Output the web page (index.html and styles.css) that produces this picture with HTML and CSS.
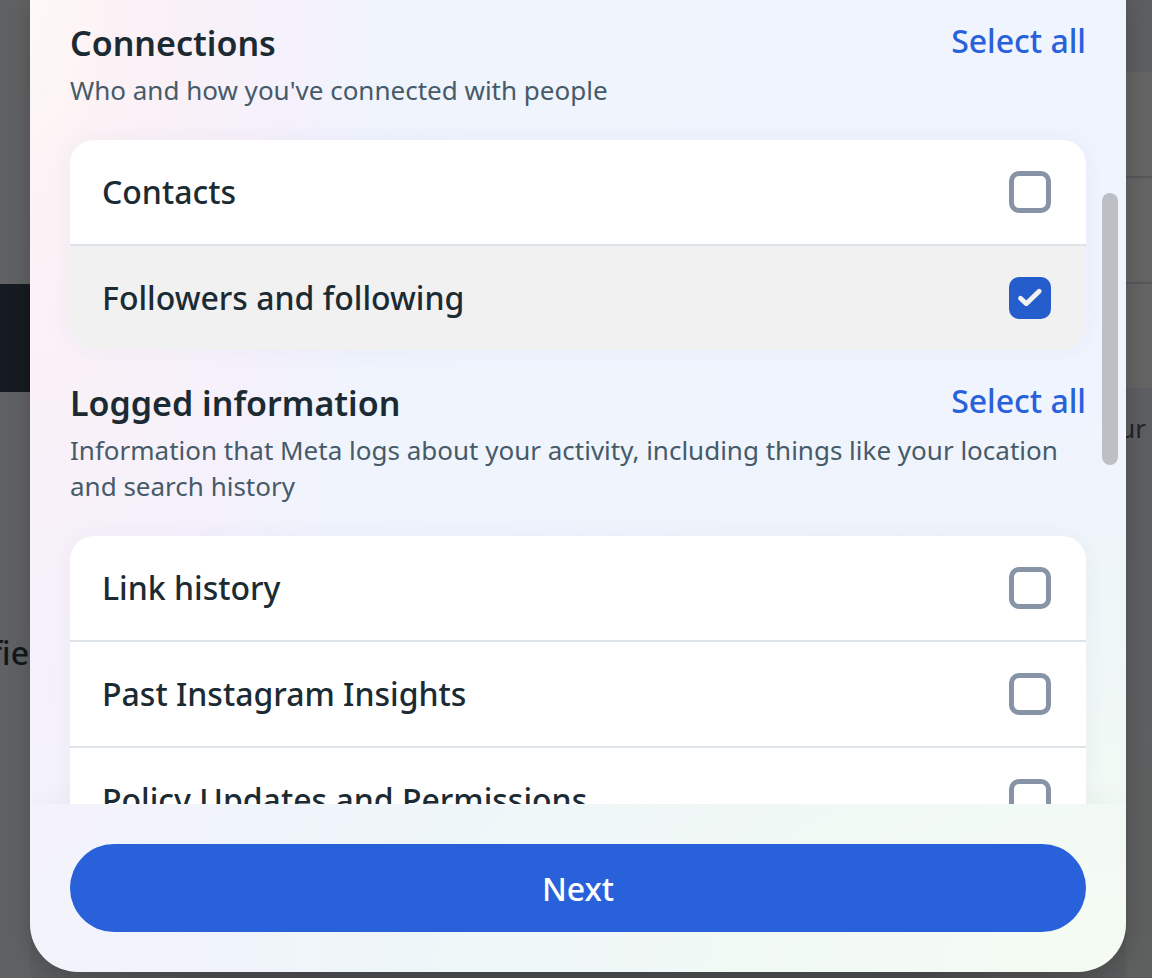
FILE: index.html
```html
<!DOCTYPE html>
<html lang="en">
<head>
<meta charset="utf-8">
<meta name="viewport" content="width=device-width, initial-scale=1">
<title>Select information</title>
<link rel="stylesheet" href="styles.css">
</head>
<body>
<div class="screen">
  <div class="page-behind" aria-hidden="true">
    <div class="side side-left">
      <div class="dark-block"></div>
      <div class="side-heading">fie</div>
    </div>
    <div class="side side-right">
      <div class="list-behind"><div></div><div></div><div></div></div>
      <div class="side-note">ur</div>
    </div>
  </div>
  <main class="dialog" role="dialog" aria-label="Select information">
    <div class="scroll-area">
      <section class="group">
        <header class="group-head">
          <h2>Connections</h2>
          <button type="button" class="select-all">Select all</button>
        </header>
        <p class="description">Who and how you've connected with people</p>
        <div class="card">
          <label class="row"><span>Contacts</span><input type="checkbox" class="check"></label>
          <label class="row active"><span>Followers and following</span>
            <span class="check-box">
              <input type="checkbox" class="check" checked>
              <svg class="tick" viewBox="0 0 42 42" aria-hidden="true"><path d="M11.5 21.2l5.8 5.6L30.2 14.2"/></svg>
            </span>
          </label>
        </div>
      </section>
      <section class="group">
        <header class="group-head">
          <h2>Logged information</h2>
          <button type="button" class="select-all">Select all</button>
        </header>
        <p class="description">Information that Meta logs about your activity, including things like your location and search history</p>
        <div class="card">
          <label class="row"><span>Link history</span><input type="checkbox" class="check"></label>
          <label class="row"><span>Past Instagram Insights</span><input type="checkbox" class="check"></label>
          <label class="row"><span>Policy Updates and Permissions</span><input type="checkbox" class="check"></label>
        </div>
      </section>
      <div class="scroll-thumb"></div>
    </div>
    <footer class="footer">
      <button type="button" class="next">Next</button>
    </footer>
  </main>
</div>
</body>
</html>
```

FILE: styles.css
```css
* { box-sizing: border-box; }

body {
  margin: 0;
  font-family: "Noto Sans", "Open Sans", sans-serif;
  color: #1c2b33;
}

button { font-family: inherit; cursor: pointer; }

.screen {
  display: grid;
  height: 100vh;
  overflow: hidden;
  background: linear-gradient(to right, #5e6063, #4d4e51 20%, #4d4e51 80%, #5a5c5d);
}

.page-behind,
.dialog { grid-area: 1 / 1; min-height: 0; }

.page-behind {
  display: flex;
  justify-content: space-between;
  overflow: hidden;
}

.side { display: flex; flex-direction: column; }

.side-left {
  width: 30px;
  padding-top: 284px;
  background: #5f6163;
}

.dark-block { height: 108px; background: #151b20; }

.side-heading {
  display: flex;
  justify-content: flex-end;
  margin-top: 240px;
  padding-right: 1px;
  font-size: 32px;
  font-weight: 500;
  line-height: 42px;
  color: #11181c;
}

.side-right {
  width: 26px;
  padding-top: 72px;
  background: linear-gradient(#5d5e61 50%, #5d605f);
}

.list-behind { background: #646464; }
.list-behind div { height: 106px; border-bottom: 2px solid #565758; }
.list-behind div:last-child { height: 104px; border: 0; }

.side-note {
  display: flex;
  justify-content: flex-end;
  padding: 22px 6px 0 0;
  font-size: 26px;
  line-height: 36px;
  color: #1c2529;
}

.dialog {
  display: flex;
  flex-direction: column;
  margin: 0 26px 6px 30px;
  overflow: hidden;
  border-radius: 0 0 48px 48px;
  background:
    radial-gradient(31% 92% at 0 0, #fdf7f5 4%, #fcf2f6 25%, #f9f1f8 48%, #f5f1fc 76%, #f5f1fc00),
    radial-gradient(95% 58% at 100% 100%, #f4fbf3 8%, #f1f9f5 38%, #eff6f9 70%, #eff6f900),
    linear-gradient(to right, #f3f3fb, #eff4fd 40%, #f0f4fe);
  box-shadow: 0 4px 24px rgba(0, 0, 0, 0.2);
}

.scroll-area {
  position: relative;
  flex: 1;
  min-height: 0;
  display: flex;
  flex-direction: column;
  gap: 34px;
  padding: 24px 40px 0;
  overflow: hidden;
}

.group { flex: none; }

.group-head {
  display: flex;
  justify-content: space-between;
  align-items: flex-start;
  height: 40px;
}

h2 {
  margin: 0;
  font-size: 34px;
  font-weight: 600;
  line-height: 38px;
}

.select-all {
  padding: 0;
  border: 0;
  background: none;
  color: #2861da;
  font-size: 32px;
  font-weight: 500;
  line-height: 34px;
}

.description {
  margin: 8px 0 32px;
  color: #465a69;
  font-size: 26px;
  line-height: 36px;
}

.card {
  overflow: hidden;
  border-radius: 24px;
  background: #fff;
  box-shadow: 0 0 24px rgba(60, 60, 140, 0.05);
}

.row {
  display: flex;
  justify-content: space-between;
  align-items: center;
  height: 104px;
  padding: 0 35px 0 32px;
  font-size: 32px;
  font-weight: 500;
  line-height: 40px;
}

.row + .row { height: 106px; border-top: 2px solid #dee3e8; }
.row.active { background: #f1f1f1; }

.check {
  appearance: none;
  display: block;
  width: 42px;
  height: 42px;
  margin: 0;
  border: 5px solid #8694a5;
  border-radius: 10px;
}

.check:checked { border-color: #265dcc; background: #265dcc; }

.check-box { display: grid; }
.check-box > * { grid-area: 1 / 1; }

.tick {
  width: 42px;
  height: 42px;
  fill: none;
  stroke: #f1f1f1;
  stroke-width: 4.8;
  stroke-linecap: round;
  stroke-linejoin: round;
  pointer-events: none;
}

.scroll-thumb {
  position: absolute;
  top: 193px;
  right: 8px;
  width: 16px;
  height: 272px;
  border-radius: 8px;
  background: #bcc0c4;
}

.footer {
  flex: none;
  padding: 40px;
  box-shadow: 0 0 32px rgba(0, 0, 0, 0.04);
}

.next {
  display: block;
  width: 100%;
  height: 88px;
  border: 0;
  border-radius: 44px;
  background: #2861da;
  color: #fff;
  font-size: 32px;
  font-weight: 500;
}
```
